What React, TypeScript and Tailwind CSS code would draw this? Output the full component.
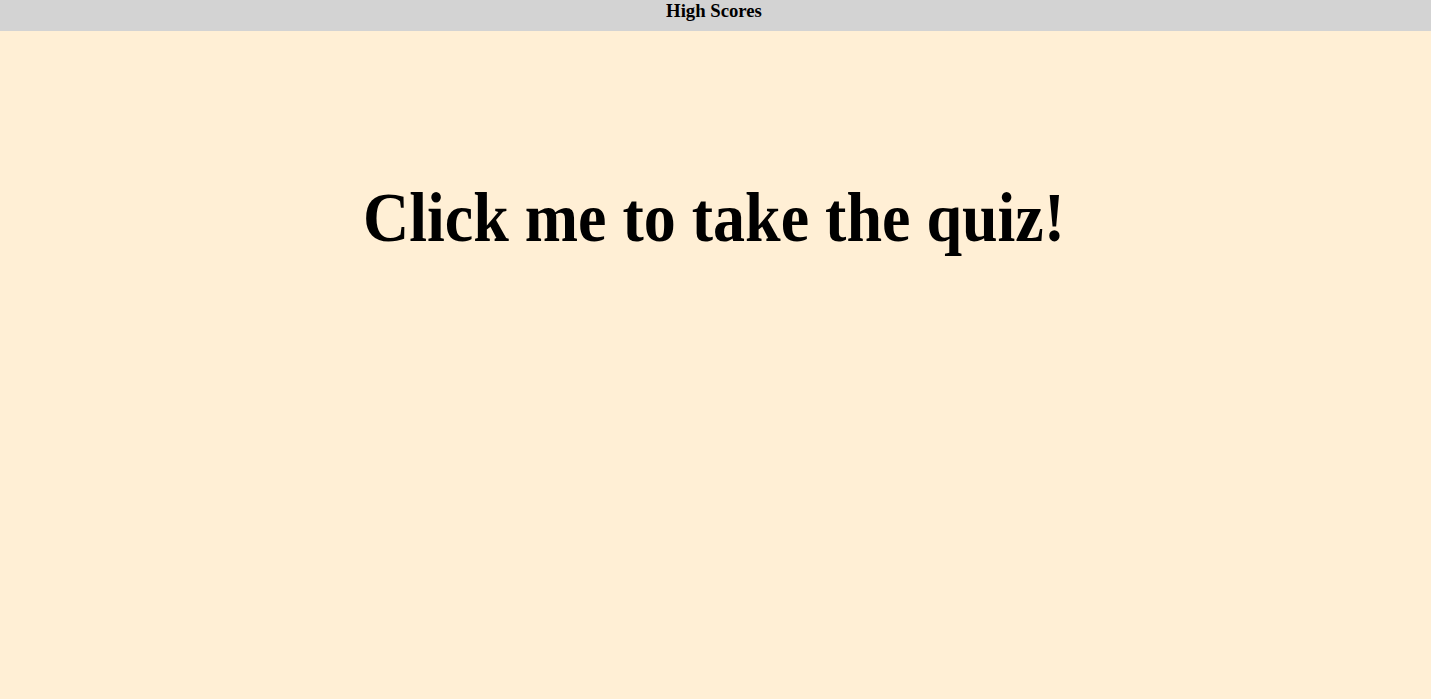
export default function App() {
  return (
    <div className="min-h-screen bg-[#ffefd5] font-['Liberation_Serif',serif] text-black">
      <header className="flex h-[31px] justify-center bg-[#d3d3d3] pr-[3px] pt-[2px]">
        <h3 className="text-[18.72px] font-bold leading-none">High Scores</h3>
      </header>
      <main className="flex justify-center pr-[3px] pt-[155px]">
        <h1 className="cursor-pointer text-[64px] font-bold leading-none scale-y-[1.085]">Click me to take the quiz!</h1>
      </main>
    </div>
  )
}
